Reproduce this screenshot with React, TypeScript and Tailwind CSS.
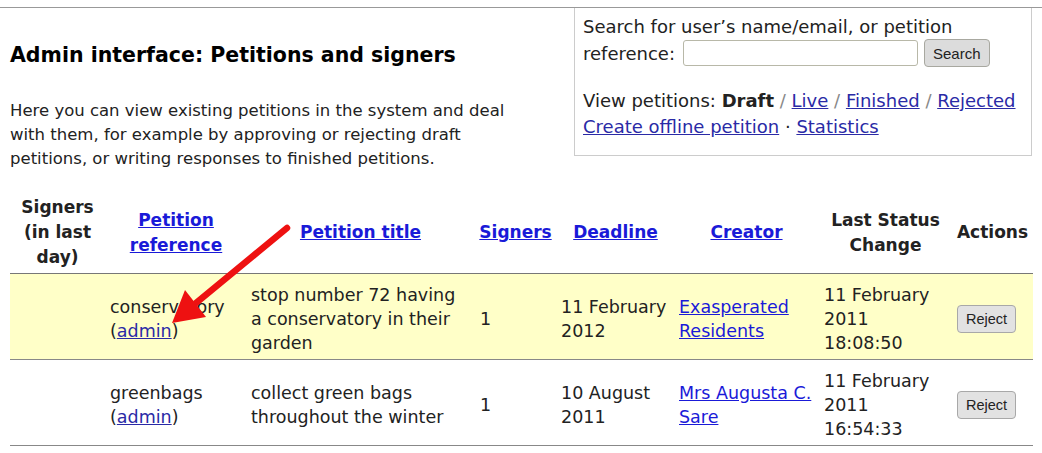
import React from "react";

const headLink = "text-[#1a1ad8] underline";
const navLink = "text-[#2a2aa6] underline";

const rows = [
  {
    ref: "conservatory",
    title: "stop number 72 having a conservatory in their garden",
    signers: "1",
    deadline: "11 February 2012",
    creator: "Exasperated Residents",
    changed: ["11 February", "2011", "18:08:50"],
    bg: "bg-[#ffffc8]",
  },
  {
    ref: "greenbags",
    title: "collect green bags throughout the winter",
    signers: "1",
    deadline: "10 August 2011",
    creator: "Mrs Augusta C. Sare",
    changed: ["11 February", "2011", "16:54:33"],
    bg: "bg-white",
  },
];

const RejectButton: React.FC = () => (
  <button
    type="button"
    className="h-[28px] px-[8px] rounded-[4px] border border-[#a8a8a8] bg-[#e2e2e2] text-[14.5px] text-[#222] font-['Liberation_Sans',Arial,sans-serif]"
  >
    Reject
  </button>
);

const th = "px-[3px] pt-[2px] pb-[3px] text-center align-middle";
const td = "pt-[9px] pb-[4px] align-middle";

export default function App() {
  return (
    <div className="relative min-h-[453px] bg-white text-[#222] font-['DejaVu_Sans',sans-serif] text-[16.5px] leading-[24px]">
      <div className="pt-[7px]">
        <div className="border-t border-[#999] px-[10px]">
          <div className="flex justify-between items-start">
            <div className="w-[520px]">
              <h1 className="mt-[33px] text-[20.5px] leading-[28px] font-bold text-black">
                Admin interface: Petitions and signers
              </h1>
              <p className="mt-[30px]">
                Here you can view existing petitions in the system and deal
                with them, for example by approving or rejecting draft
                petitions, or writing responses to finished petitions.
              </p>
            </div>
            <div className="w-[458px] border border-t-0 border-[#ccc] px-[8px] pt-[6px] pb-[15px] text-[18px] leading-[25px]">
              <form className="flex flex-wrap items-center">
                <span>Search for user’s name/email, or petition</span>
                <span className="w-full flex items-center">
                  reference:
                  <input
                    type="text"
                    className="ml-[8px] w-[235px] h-[26px] rounded-[3px] border border-[#b8b8a8] bg-white"
                  />
                  <button
                    type="button"
                    className="ml-[6px] h-[28px] px-[8px] rounded-[4px] border border-[#a8a8a0] bg-[#dcdcdc] text-[15px] text-[#222] font-['Liberation_Sans',Arial,sans-serif]"
                  >
                    Search
                  </button>
                </span>
              </form>
              <p className="mt-[21px] leading-[26px]">
                View petitions: <b>Draft</b>{" "}
                <span className="text-[#888]">/</span>{" "}
                <a className={navLink} href="#">Live</a>{" "}
                <span className="text-[#888]">/</span>{" "}
                <a className={navLink} href="#">Finished</a>{" "}
                <span className="text-[#888]">/</span>{" "}
                <a className={navLink} href="#">Rejected</a>
                <br />
                <a className={navLink} href="#">Create offline petition</a> ·{" "}
                <a className={navLink} href="#">Statistics</a>
              </p>
            </div>
          </div>

          <table className="mt-[22px] w-[1023px] table-fixed border-collapse">
            <colgroup>
              <col className="w-[95px]" />
              <col className="w-[142px]" />
              <col className="w-[227px]" />
              <col className="w-[83px]" />
              <col className="w-[117px]" />
              <col className="w-[145px]" />
              <col className="w-[133px]" />
              <col className="w-[81px]" />
            </colgroup>
            <thead>
              <tr className="border-b border-[#777] font-bold text-[17px] leading-[25px]">
                <th className={th}>Signers (in last day)</th>
                <th className={th}>
                  <a className={headLink} href="#">Petition reference</a>
                </th>
                <th className={th}>
                  <a className={headLink} href="#">Petition title</a>
                </th>
                <th className={th}>
                  <a className={headLink} href="#">Signers</a>
                </th>
                <th className={th}>
                  <a className={headLink} href="#">Deadline</a>
                </th>
                <th className={th}>
                  <a className={headLink} href="#">Creator</a>
                </th>
                <th className={th}>Last Status Change</th>
                <th className={th}>Actions</th>
              </tr>
            </thead>
            <tbody className="text-[17.5px]">
              {rows.map((r) => (
                <tr key={r.ref} className={`${r.bg} border-b border-[#888]`}>
                  <td className={`${td} px-[5px]`}></td>
                  <td className={`${td} px-[5px]`}>
                    {r.ref}
                    <br />(<a className={navLink} href="#">admin</a>)
                  </td>
                  <td className={`${td} pl-[4px] pr-[8px]`}>{r.title}</td>
                  <td className={`${td} px-[6px]`}>{r.signers}</td>
                  <td className={`${td} px-[4px]`}>{r.deadline}</td>
                  <td className={`${td} pl-[5px] pr-[2px]`}>
                    <a className={headLink} href="#">{r.creator}</a>
                  </td>
                  <td className={`${td} px-[5px]`}>
                    {r.changed.map((c) => (
                      <div key={c}>{c}</div>
                    ))}
                  </td>
                  <td className={`${td} px-[5px]`}>
                    <RejectButton />
                  </td>
                </tr>
              ))}
            </tbody>
          </table>
        </div>
      </div>

      <svg
        className="absolute left-0 top-0 pointer-events-none"
        width="1042"
        height="453"
        viewBox="0 0 1042 453"
      >
        <line x1="287" y1="228" x2="196" y2="303" stroke="#ee1111" strokeWidth="6.5" strokeLinecap="round" />
        <polygon points="172,323 206,317 185,290" fill="#ee1111" />
      </svg>
    </div>
  );
}
